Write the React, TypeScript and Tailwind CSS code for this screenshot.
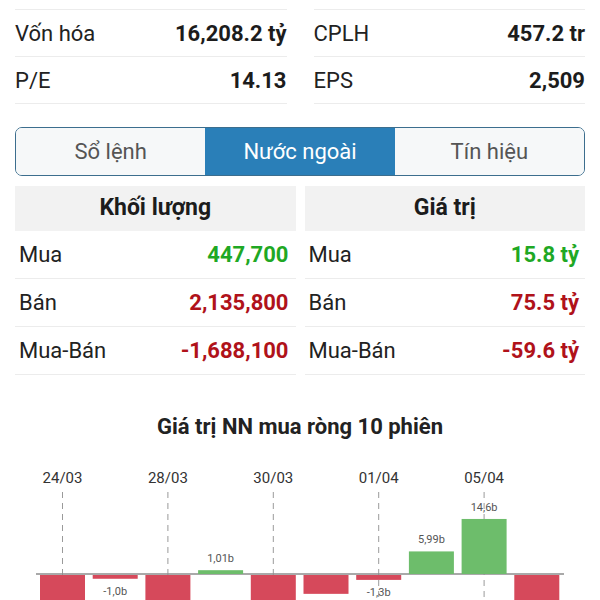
import React from "react";

type Stat = { label: string; value: string };

const leftStats: Stat[] = [
  { label: "Vốn hóa", value: "16,208.2 tỷ" },
  { label: "P/E", value: "14.13" },
];
const rightStats: Stat[] = [
  { label: "CPLH", value: "457.2 tr" },
  { label: "EPS", value: "2,509" },
];

type Flow = { label: string; value: string; color: string };

const volume: Flow[] = [
  { label: "Mua", value: "447,700", color: "text-[#1fa824]" },
  { label: "Bán", value: "2,135,800", color: "text-[#b0121a]" },
  { label: "Mua-Bán", value: "-1,688,100", color: "text-[#b0121a]" },
];
const amount: Flow[] = [
  { label: "Mua", value: "15.8 tỷ", color: "text-[#1fa824]" },
  { label: "Bán", value: "75.5 tỷ", color: "text-[#b0121a]" },
  { label: "Mua-Bán", value: "-59.6 tỷ", color: "text-[#b0121a]" },
];

// net foreign buy value per session, billions
const sessions = [-12, -1.0, -12, 1.01, -12, -5.0, -1.3, 5.99, 14.6, -12];
const labels: Record<number, string> = {
  1: "-1,0b",
  3: "1,01b",
  6: "-1,3b",
  7: "5,99b",
  8: "14,6b",
};
const dates = [
  { i: 0, text: "24/03" },
  { i: 2, text: "28/03" },
  { i: 4, text: "30/03" },
  { i: 6, text: "01/04" },
  { i: 8, text: "05/04" },
];

const StatColumn = ({ items }: { items: Stat[] }) => (
  <div className="border-t border-[#ececec]">
    {items.map((s) => (
      <div
        key={s.label}
        className="h-[47px] flex items-center justify-between border-b border-[#ececec] text-[22px]"
      >
        <span className="text-[#222]">{s.label}</span>
        <span className="font-bold text-[#1c1c1c]">{s.value}</span>
      </div>
    ))}
  </div>
);

const FlowTable = ({ title, rows, padR }: { title: string; rows: Flow[]; padR: string }) => (
  <div>
    <div className="h-[45px] bg-[#f2f2f2] flex items-center justify-center text-[23px] font-bold text-[#1c1c1c]">
      {title}
    </div>
    {rows.map((r) => (
      <div
        key={r.label}
        className={`h-[48px] flex items-center justify-between border-b border-[#ececec] pl-1 text-[22px] ${padR}`}
      >
        <span className="text-[#222]">{r.label}</span>
        <span className={`font-bold ${r.color}`}>{r.value}</span>
      </div>
    ))}
  </div>
);

const NetChart = () => {
  const axisY = 124;
  const scale = 3.77;
  const x0 = 40;
  const pitch = 52.7;
  const barW = 45;
  return (
    <svg width="600" height="150" className="block">
      {dates.map((d) => {
        const cx = x0 + d.i * pitch + barW / 2;
        return (
          <g key={d.text}>
            <text
              x={cx}
              y={33}
              textAnchor="middle"
              fontSize="15"
              fill="#333"
              fontFamily="Roboto, sans-serif"
            >
              {d.text}
            </text>
            <line x1={cx} y1={42} x2={cx} y2={150} stroke="#9a9a9a" strokeWidth="1" strokeDasharray="6 5" />
          </g>
        );
      })}
      <line x1={36} y1={axisY} x2={564} y2={axisY} stroke="#8c8c8c" strokeWidth="1.5" />
      {sessions.map((v, i) => {
        const x = x0 + i * pitch;
        const h = Math.abs(v) * scale;
        const y = v >= 0 ? axisY - h : axisY + 1;
        return (
          <rect key={i} x={x} y={y} width={barW} height={h} fill={v >= 0 ? "#6dbd6b" : "#d6495b"} />
        );
      })}
      {Object.entries(labels).map(([k, text]) => {
        const i = Number(k);
        const v = sessions[i];
        const cx = x0 + i * pitch + barW / 2;
        const h = Math.abs(v) * scale;
        const y = v >= 0 ? axisY - h - 8 : axisY + h + 17;
        return (
          <text
            key={k}
            x={cx}
            y={y}
            textAnchor="middle"
            fontSize="11"
            fill="#555"
            fontFamily="Roboto, sans-serif"
          >
            {text}
          </text>
        );
      })}
    </svg>
  );
};

export default function App() {
  return (
    <div className="w-[600px] h-[600px] overflow-hidden bg-white font-['Roboto',sans-serif] text-[#222]">
      <div className="px-[15px] pt-[9px] grid grid-cols-2 gap-x-[27px]">
        <StatColumn items={leftStats} />
        <StatColumn items={rightStats} />
      </div>

      <div className="mx-[15px] mt-[23px] h-[49px] flex rounded-[7px] border-[1.5px] border-[#3c6e8e] overflow-hidden text-[22px]">
        <div className="flex-1 flex items-center justify-center bg-[#f6f8f9] text-[#555]">Sổ lệnh</div>
        <div className="flex-1 flex items-center justify-center bg-[#2a7fb8] text-white">Nước ngoài</div>
        <div className="flex-1 flex items-center justify-center bg-[#f6f8f9] text-[#555]">Tín hiệu</div>
      </div>

      <div className="mx-[15px] mt-[10px] grid grid-cols-2 gap-x-[9px]">
        <FlowTable title="Khối lượng" rows={volume} padR="pr-[7px]" />
        <FlowTable title="Giá trị" rows={amount} padR="pr-[6px]" />
      </div>

      <h2 className="mt-[38px] text-center text-[22px] leading-[28px] font-bold text-[#222]">
        Giá trị NN mua ròng 10 phiên
      </h2>
      <div className="mt-[9px]">
        <NetChart />
      </div>
    </div>
  );
}
